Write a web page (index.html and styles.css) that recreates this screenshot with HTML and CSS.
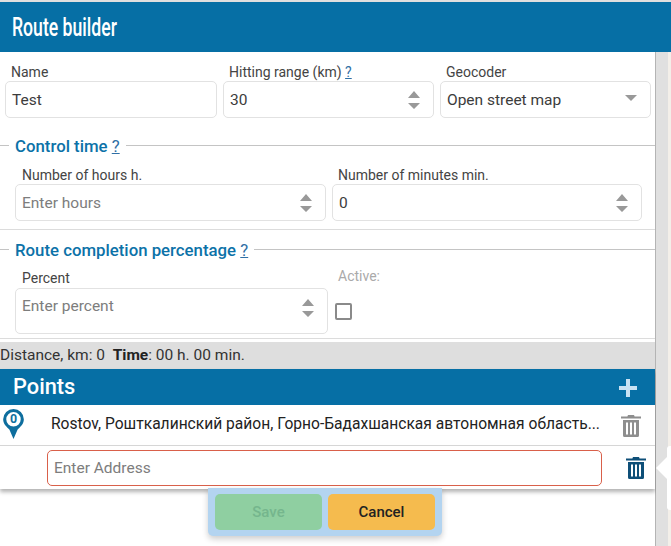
FILE: index.html
```html
<!DOCTYPE html>
<html lang="en">
<head>
<meta charset="utf-8">
<title>Route builder</title>
<link rel="stylesheet" href="styles.css">
</head>
<body>
<div class="page">
  <main class="panel">
    <header class="title-bar"><h1>Route builder</h1></header>

    <section class="row row-top">
      <div class="field">
        <label>Name</label>
        <div class="input h37"><span class="value">Test</span></div>
      </div>
      <div class="field">
        <label>Hitting range (km) <a class="help small">?</a></label>
        <div class="input h37"><span class="value">30</span>
          <svg class="spin" viewBox="0 0 12 18"><path d="M6 0l6 7H0zM0 12h12l-6 6z"/></svg></div>
      </div>
      <div class="field">
        <label>Geocoder</label>
        <div class="input h37"><span class="value">Open street map</span>
          <svg class="caret" viewBox="0 0 12 6"><path d="M0 0h12L6 6z"/></svg></div>
      </div>
    </section>

    <fieldset class="group group-time">
      <div class="legend"><span class="rule short"></span><h2>Control time <a class="help">?</a></h2><span class="rule"></span></div>
      <div class="cols">
        <div class="field">
          <label>Number of hours h.</label>
          <div class="input h37"><span class="placeholder">Enter hours</span>
            <svg class="spin" viewBox="0 0 12 18"><path d="M6 0l6 7H0zM0 12h12l-6 6z"/></svg></div>
        </div>
        <div class="field">
          <label>Number of minutes min.</label>
          <div class="input h37"><span class="value">0</span>
            <svg class="spin" viewBox="0 0 12 18"><path d="M6 0l6 7H0zM0 12h12l-6 6z"/></svg></div>
        </div>
      </div>
    </fieldset>

    <fieldset class="group group-percent">
      <div class="legend"><span class="rule short"></span><h2>Route completion percentage <a class="help">?</a></h2><span class="rule"></span></div>
      <div class="cols-percent">
        <div class="field field-percent">
          <label>Percent</label>
          <div class="input h46 top"><span class="placeholder">Enter percent</span>
            <svg class="spin" viewBox="0 0 12 18"><path d="M6 0l6 7H0zM0 12h12l-6 6z"/></svg></div>
        </div>
        <div class="field-active">
          <span class="muted">Active:</span>
          <span class="checkbox"></span>
        </div>
      </div>
    </fieldset>

    <div class="stats">Distance, km: 0 &nbsp;<b>Time</b>: 00 h. 00 min.</div>

    <section class="points">
      <div class="points-head">
        <h2>Points</h2>
        <svg class="plus" viewBox="0 0 18 18"><path d="M7 0h4v7h7v4h-7v7H7v-7H0V7h7z"/></svg>
      </div>
      <div class="point">
        <svg class="pin" viewBox="1 1 20 29"><path fill-rule="evenodd" d="M11 1a10 10 0 0 1 10 10c0 4.500-3.400 7.500-6 9.800L11 30l-4-9.200C4.400 18.500 1 15.500 1 11A10 10 0 0 1 11 1zm0 3a7 7 0 1 0 0 14 7 7 0 0 0 0-14z"/><text x="11" y="15" text-anchor="middle" class="pin-num">0</text></svg>
        <span class="address">Rostov, Рошткалинский район, Горно-Бадахшанская автономная область...</span>
        <svg class="trash grey" viewBox="0 0 20 22"><path d="M7 0h6l.6 1.500H20v2H0v-2h6.400zM2 5h16v15.500a1.500 1.500 0 0 1-1.500 1.500h-13A1.500 1.500 0 0 1 2 20.500zm3 2.500V19.500h2V7.500zm4 0V19.500h2V7.500zm4 0V19.500h2V7.500z" fill-rule="evenodd"/></svg>
      </div>
      <div class="point point-edit">
        <div class="input address-input"><span class="placeholder">Enter Address</span></div>
        <svg class="trash navy" viewBox="0 0 20 22"><path d="M7 0h6l.6 1.500H20v2H0v-2h6.400zM2 5h16v15.500a1.500 1.500 0 0 1-1.500 1.500h-13A1.500 1.500 0 0 1 2 20.500zm3 2.500V19.500h2V7.500zm4 0V19.500h2V7.500zm4 0V19.500h2V7.500z" fill-rule="evenodd"/></svg>
      </div>
    </section>
  </main>
  <div class="track"></div>
  <div class="gutter"></div>

  <div class="actions">
    <button class="btn save" disabled>Save</button>
    <button class="btn cancel">Cancel</button>
  </div>
  <div class="tip"><span class="tip-arrow"></span></div>
</div>
</body>
</html>
```

FILE: styles.css
```css
* { box-sizing: border-box; }
html, body { margin: 0; height: 100%; overflow: hidden; }
body { font-family: Roboto, "Liberation Sans", sans-serif; font-size: 14px; color: #333; background: #fff; }
.page { position: relative; display: flex; width: 671px; height: 546px; padding-top: 2px; background: #dfdfdf; }
.panel { width: 656px; flex: none; background: #fff; border-right: 1px solid #b4b4b4; }
.track { width: 12px; flex: none; background: #e0e0e0; margin-top: 50px; }
.gutter { flex: 1; background: #f3efe9; margin-top: 50px; }
.title-bar { height: 50px; margin-right: -16px; background: #066fa5; display: flex; align-items: center; padding-left: 12px; position: relative; }
h1 { margin: 0; font: 500 25px/1 Roboto, sans-serif; color: #fff; transform: scaleX(.705); transform-origin: left center; white-space: nowrap; }

.row-top { display: grid; grid-template-columns: 212px 211px 211px; gap: 6px; padding: 12px 0 0 5px; height: 83px; }
.field { display: flex; flex-direction: column; min-width: 0; }
label { font-size: 14px; line-height: 17px; padding-left: 6px; color: #444; white-space: nowrap; }
.input { display: flex; align-items: center; justify-content: space-between; padding: 0 13px 0 6px; background: #fff; border: 1px solid #e2e2e2; border-radius: 5px; font-size: 15.500px; }
.h37 { height: 37px; }
.h46 { height: 46px; }
.top { align-items: flex-start; padding-top: 8px; }
.top .spin { margin-top: 2px; }
.value { color: #3c3c3c; }
.placeholder { color: #7d7d7d; }
.spin { width: 12px; height: 18px; fill: #999; flex: none; }
.caret { width: 12px; height: 6px; fill: #999; flex: none; margin: 0 0 4px; }
.help { color: #2f6fa5; text-decoration: underline; font-weight: 400; }

.group { border: 0; margin: 0; padding: 0; }
.group-time { height: 95px; border-bottom: 1px solid #dcdcdc; }
.group-percent { height: 109px; border-bottom: 1px solid #dcdcdc; }
.legend { display: flex; align-items: center; height: 20px; }
.rule { flex: 1; height: 1px; background: #c4c4c4; }
.rule.short { flex: none; width: 9px; }
h2 { margin: 0; padding: 2px 6px 0; font-size: 16.800px; font-weight: 500; color: #0c72a8; white-space: nowrap; line-height: 20px; }
.cols { display: grid; grid-template-columns: 311px 310px; gap: 6px; padding: 0 0 0 15px; margin-top: 10px; }
.cols .field label { padding-left: 7px; line-height: 18px; margin-top: 1px; }
.cols .field:last-child label { padding-left: 6px; }
.group-percent .legend { margin-top: 9px; }
.cols-percent { display: flex; padding-left: 15px; margin-top: 9px; }
.field-percent { width: 313px; flex: none; }
.field-percent label { line-height: 19px; margin-top: 1px; padding-left: 7px; }
.field-active { display: flex; flex-direction: column; padding-left: 7px; margin-top: -1px; }
.muted { color: #aaa; font-size: 14px; line-height: 18px; padding-left: 3px; }
.checkbox { width: 17px; height: 17px; border: 2px solid #8a8a8a; border-radius: 2px; margin-top: 18px; }

.stats { height: 27px; margin-top: 3px; background: #dedede; font-size: 15.500px; line-height: 26px; color: #333; white-space: nowrap; overflow: hidden; }
.stats b { font-weight: 700; color: #222; }

.points { box-shadow: 0 3px 4px rgba(0,0,0,.3); }
.points-head { height: 36px; background: #066fa5; display: flex; align-items: center; justify-content: space-between; padding: 0 18px 0 7px; }
.points-head h2 { color: #fff; font-size: 21.800px; font-weight: 500; padding-top: 0; }
.plus { width: 18px; height: 18px; fill: #c9e2f3; margin-top: 2px; }
.point { display: flex; align-items: center; background: #fff; position: relative; }
.point:nth-child(2) { height: 41px; border-bottom: 1px solid #d6d6d6; padding: 0 14px 0 3px; }
.pin { width: 21px; height: 30px; fill: #0e6e9e; flex: none; margin-top: -2px; }
.pin-num { font-family: Roboto, sans-serif; font-size: 12px; font-weight: 700; fill: #0e6e9e; }
.address { flex: 1; padding: 0 0 2px 27px; font-size: 15.600px; color: #222; white-space: nowrap; overflow: hidden; }
.trash { width: 20px; height: 22px; flex: none; }
.trash.grey { fill: #8e8e8e; margin-top: 2px; }
.trash.navy { fill: #0e4f78; }
.point-edit { height: 43px; padding: 0 9px 0 47px; gap: 24px; }
.address-input { flex: 1; height: 36px; border-color: #d9604a; }

.actions { position: absolute; left: 208px; top: 488px; width: 234px; height: 48px; padding: 6px 7px; display: flex; gap: 6px; background: #b3d4f0; border-radius: 0 0 5px 5px; box-shadow: 0 3px 6px rgba(0,0,0,.2); }
.btn { flex: 1; height: 36px; border: 0; border-radius: 5px; font: 500 15px Roboto, sans-serif; }
.save { background: #8fcfa1; color: #75b68d; }
.cancel { background: #f5bb4e; color: #222; }
.tip { position: absolute; left: 667px; top: 446px; width: 10px; height: 64px; background: #fff; border-radius: 3px; }
.tip-arrow { position: absolute; left: -11px; top: 11px; border: 11px solid transparent; border-left: 0; border-right-color: #fff; }
```
